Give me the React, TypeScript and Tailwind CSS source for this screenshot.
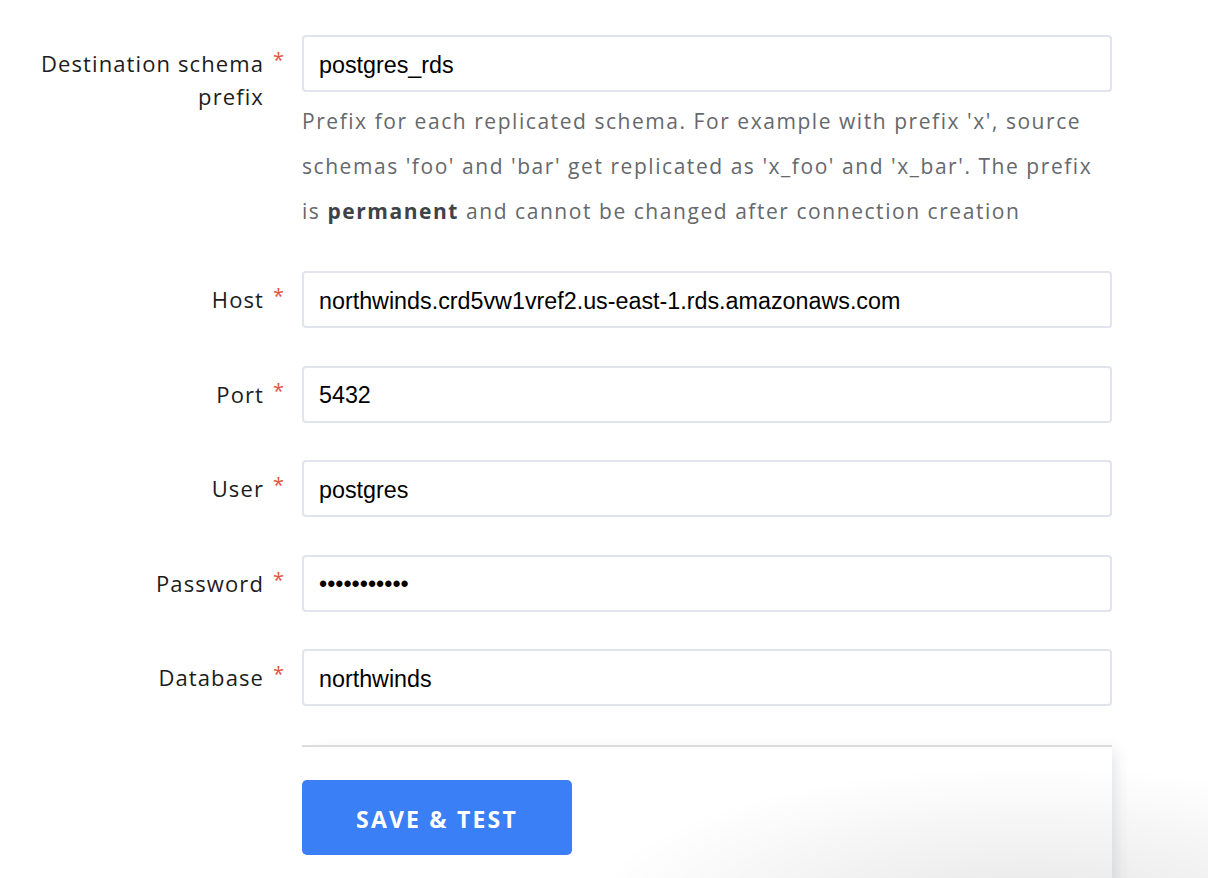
import React from "react";

const Label = ({ children }: { children: React.ReactNode }) => (
  <div className="w-[285px] shrink-0 flex justify-end items-start pr-[2px]">
    <div className="text-right text-[22px] tracking-[1.1px] leading-[33px] text-[#1c1c1c] pt-[12px]">{children}</div>
    <span className="text-[#e5533d] text-[20px] leading-[33px] ml-[9px] pt-[8px] w-[10px]">*</span>
  </div>
);

const Field = ({ value }: { value: string }) => (
  <div className="w-[810px] h-[57px] border-2 border-[#e1e4ec] rounded-[4px] flex items-center pl-[15px] pt-[3px] text-[23.3px] text-black bg-white" style={{ fontFamily: '"Liberation Sans", Arial, sans-serif' }}>
    {value}
  </div>
);

export default function App() {
  const rows: [string, string][] = [
    ["Host", "northwinds.crd5vw1vref2.us-east-1.rds.amazonaws.com"],
    ["Port", "5432"],
    ["User", "postgres"],
    ["Password", "•••••••••••"],
    ["Database", "northwinds"],
  ];
  return (
    <div className="relative w-[1208px] h-[878px] bg-white overflow-hidden" style={{ fontFamily: '"Open Sans", Lato, sans-serif' }}>
      <div className="relative flex flex-col pt-[35px]">
        <div className="flex gap-[17px]">
          <Label>
            Destination schema<br />prefix
          </Label>
          <div className="flex flex-col">
            <Field value="postgres_rds" />
            <p className="w-[810px] mt-[7px] text-[21px] tracking-[1.55px] leading-[45px] text-[#66686c] whitespace-nowrap">
              Prefix for each replicated schema. For example with prefix 'x', source<br />
              schemas 'foo' and 'bar' get replicated as 'x_foo' and 'x_bar'. The prefix<br />
              is <b className="text-[#3f4247] font-bold">permanent</b> and cannot be changed after connection creation
            </p>
          </div>
        </div>
        <div className="flex flex-col gap-[37.5px] mt-[37px]">
          {rows.map(([l, v]) => (
            <div key={l} className="flex gap-[17px]">
              <Label>{l}</Label>
              <Field value={v} />
            </div>
          ))}
        </div>
        <div className="ml-[302px] w-[810px] mt-[39px] border-t-2 border-[#dcdcdc] bg-white shadow-[10px_0_14px_-6px_rgba(40,50,80,0.12)] h-[200px] pt-[33px]">
          <button className="w-[270px] h-[75px] bg-[#3a7ff6] rounded-[5px] text-white text-[23px] font-bold tracking-[2.2px] pt-[4px]">
            SAVE &amp; TEST
          </button>
        </div>
      </div>
      <div className="pointer-events-none absolute left-[500px] right-0 bottom-0 h-[140px] bg-[radial-gradient(ellipse_at_75%_130%,rgba(0,0,0,0.10),rgba(0,0,0,0)_60%)]" />
    </div>
  );
}
